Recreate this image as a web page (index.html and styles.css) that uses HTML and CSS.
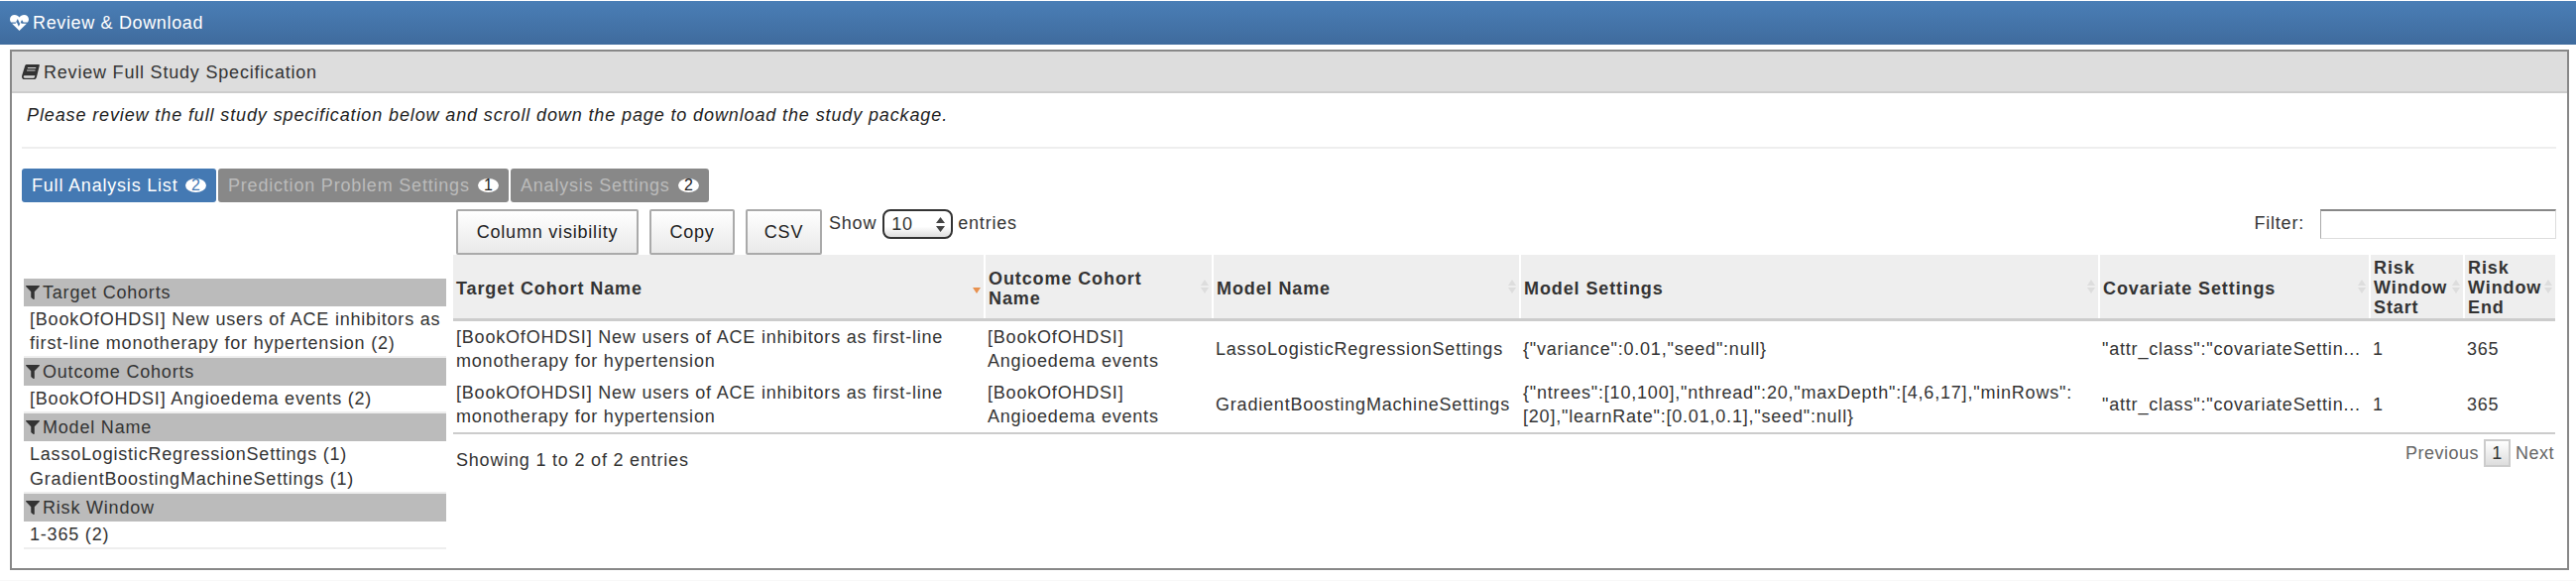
FILE: index.html
```html
<!DOCTYPE html>
<html>
<head>
  <meta charset="UTF-8">
  <title>Review &amp; Download</title>
  <link rel="stylesheet" href="styles.css">
</head>
<body>
  <div class="topbar">
    <svg class="top-icon" viewBox="0 0 24 20"><path d="M12 20 2.6 11h4.600l1.300-2.400 2.700 6 2.600-5.200 1 1.600h6.600zM1.300 9.400C.5 8.300 0 7 0 5.600 0 2.400 2.500 0 6 0c2.500 0 4.700 1.300 6 3.200C13.300 1.300 15.500 0 18 0c3.500 0 6 2.400 6 5.600 0 1.400-.5 2.700-1.300 3.800h-5.500l-2-3.100-2.500 5-2.800-6.200-2.400 4.300z"/></svg>
    Review &amp; Download
  </div>
  <div class="panel">
    <div class="panel-title">
      <svg class="book-icon" viewBox="0 0 24 20"><path fill-rule="evenodd" d="M7 0h15.500c1 0 1.500.7 1.200 1.700L20 16.500c-.5 2-1.700 3.500-4 3.500H4c-2.500 0-4-1.500-4-3.500 0-.6.100-1.200.3-1.800L4.200 2C4.600.7 5.500 0 7 0zm1 4-.4 1.400h11.200l.4-1.400zM7 7.300l-.4 1.400h11.200l.4-1.400zM4.500 15c-1.400 0-2.200.7-2.200 1.700 0 1 .8 1.600 2.200 1.600h11c.9 0 1.400-.4 1.700-1.200l.6-2.100z"/></svg>
      Review Full Study Specification
    </div>
    <div class="panel-body">
      <p class="intro">Please review the full study specification below and scroll down the page to download the study package.</p>
      <hr class="rule">
      <div class="tabs">
        <span class="tab tab-full active">Full Analysis List <b class="badge">2</b></span>
        <span class="tab tab-problem">Prediction Problem Settings <b class="badge">1</b></span>
        <span class="tab tab-analysis">Analysis Settings <b class="badge">2</b></span>
      </div>
      <div class="content">
        <div class="filters">
          <div class="filter-head"><svg class="funnel" viewBox="0 0 512 512"><path d="M488 0H24C3 0-8 26 7 41l185 185v206c0 8 4 15 10 20l80 56c16 11 38 0 38-20V226L505 41c15-15 4-41-17-41z"/></svg>Target Cohorts</div>
          <div class="filter-items">
            <div>[BookOfOHDSI] New users of ACE inhibitors as<br>first-line monotherapy for hypertension (2)</div>
          </div>
          <div class="filter-head"><svg class="funnel" viewBox="0 0 512 512"><path d="M488 0H24C3 0-8 26 7 41l185 185v206c0 8 4 15 10 20l80 56c16 11 38 0 38-20V226L505 41c15-15 4-41-17-41z"/></svg>Outcome Cohorts</div>
          <div class="filter-items">
            <div>[BookOfOHDSI] Angioedema events (2)</div>
          </div>
          <div class="filter-head"><svg class="funnel" viewBox="0 0 512 512"><path d="M488 0H24C3 0-8 26 7 41l185 185v206c0 8 4 15 10 20l80 56c16 11 38 0 38-20V226L505 41c15-15 4-41-17-41z"/></svg>Model Name</div>
          <div class="filter-items">
            <div>LassoLogisticRegressionSettings (1)</div>
            <div>GradientBoostingMachineSettings (1)</div>
          </div>
          <div class="filter-head"><svg class="funnel" viewBox="0 0 512 512"><path d="M488 0H24C3 0-8 26 7 41l185 185v206c0 8 4 15 10 20l80 56c16 11 38 0 38-20V226L505 41c15-15 4-41-17-41z"/></svg>Risk Window</div>
          <div class="filter-items">
            <div>1-365 (2)</div>
          </div>
        </div>
        <div class="results">
          <div class="toolbar">
            <span class="dt-btn btn-col">Column visibility</span>
            <span class="dt-btn btn-copy">Copy</span>
            <span class="dt-btn btn-csv">CSV</span>
            <span class="show-label">Show</span>
            <span class="select">10<svg class="select-arrows" viewBox="0 0 9 15"><path d="M4.500 0 9 6H0zM4.500 15 0 9h9z"/></svg></span>
            <span class="show-label">entries</span>
            <span class="filter-label">Filter:</span>
            <span class="filter-input"></span>
          </div>
          <table class="grid">
            <colgroup>
              <col class="c1"><col class="c2"><col class="c3"><col class="c4"><col class="c5"><col class="c6"><col class="c7">
            </colgroup>
            <thead>
              <tr>
                <th class="sorted">Target Cohort Name</th>
                <th>Outcome Cohort Name</th>
                <th>Model Name</th>
                <th>Model Settings</th>
                <th>Covariate Settings</th>
                <th class="risk">Risk Window Start</th>
                <th class="risk">Risk Window End</th>
              </tr>
            </thead>
            <tbody>
              <tr>
                <td>[BookOfOHDSI] New users of ACE inhibitors as first-line monotherapy for hypertension</td>
                <td>[BookOfOHDSI] Angioedema events</td>
                <td>LassoLogisticRegressionSettings</td>
                <td>{"variance":0.01,"seed":null}</td>
                <td>"attr_class":"covariateSettin...</td>
                <td>1</td>
                <td>365</td>
              </tr>
              <tr>
                <td>[BookOfOHDSI] New users of ACE inhibitors as first-line monotherapy for hypertension</td>
                <td>[BookOfOHDSI] Angioedema events</td>
                <td>GradientBoostingMachineSettings</td>
                <td>{"ntrees":[10,100],"nthread":20,"maxDepth":[4,6,17],"minRows":<br>[20],"learnRate":[0.01,0.1],"seed":null}</td>
                <td>"attr_class":"covariateSettin...</td>
                <td>1</td>
                <td>365</td>
              </tr>
            </tbody>
          </table>
          <div class="grid-foot">
            <span class="info">Showing 1 to 2 of 2 entries</span>
            <div class="pager">
              <span>Previous</span>
              <span class="page-on">1</span>
              <span>Next</span>
            </div>
          </div>
        </div>
      </div>
    </div>
  </div>
  <div class="page-end"></div>
</body>
</html>
```
FILE: styles.css
```css
html, body { margin: 0; padding: 0; }
body {
  background: #fff;
  color: #333;
  font-family: "Liberation Sans", Arial, sans-serif;
  font-size: 18px;
  letter-spacing: 0.8px;
  line-height: 24px;
  height: 586px;
  overflow: hidden;
}

.topbar {
  display: flex;
  align-items: center;
  gap: 4px;
  height: 44px;
  margin-top: 1px;
  padding-left: 10px;
  background: linear-gradient(#4a7eb6, #3f6b9d);
  color: #fff;
  letter-spacing: 0.65px;
}
.top-icon { width: 19px; height: 16px; fill: #fff; }

.panel {
  margin: 5px 7px 0 10px;
  height: 525px;
  box-sizing: border-box;
  border: 2px solid #888;
}
.panel-title {
  display: flex;
  align-items: center;
  gap: 4px;
  height: 39px;
  padding: 1px 0 0 10px;
  background: #ddd;
  border-bottom: 2px solid #ccc;
}
.book-icon { width: 18px; height: 15px; fill: #333; }

.panel-body { padding: 0 11px 0 10px; }
.intro {
  margin: 0;
  padding: 10px 0 0 5px;
  height: 44px;
  font-style: italic;
  letter-spacing: 0.88px;
  color: #222;
}
.rule { margin: 0 0 20px; border: 0; border-top: 2px solid #eee; }

.tabs { display: flex; gap: 2px; height: 34px; }
.tab {
  box-sizing: border-box;
  display: flex;
  align-items: center;
  justify-content: space-between;
  padding: 0 10px;
  background: #888;
  color: #bbb;
  border-radius: 3px;
}
.tab-full { width: 196px; }
.tab-problem { width: 293px; }
.tab-analysis { width: 200px; }
.tab.active { background: #4479b3; color: #fff; }
.badge {
  width: 21px;
  height: 14px;
  border-radius: 50%;
  background: #fff;
  color: #222;
  font-size: 16px;
  font-weight: normal;
  letter-spacing: 0;
  text-align: center;
  line-height: 14px;
}
.tab.active .badge { color: #4479b3; }

.content { display: flex; margin-top: 7px; }
.filters { width: 426px; margin: 70px 7px 0 2px; flex: none; }
.filter-head {
  display: flex;
  align-items: center;
  height: 28px;
  padding-left: 2px;
  background: #bbb;
}
.funnel { width: 14px; height: 14px; margin-right: 3px; fill: #333; }
.filter-items {
  padding: 1px 0 1px 6px;
  border-bottom: 2px solid #eee;
  white-space: nowrap;
}
.filter-items div + div { margin-top: 1px; }

.results { flex: 1; min-width: 0; }
.toolbar { display: flex; align-items: flex-start; height: 46px; }
.dt-btn {
  box-sizing: border-box;
  display: flex;
  align-items: center;
  justify-content: center;
  height: 46px;
  border: 2px solid #aaa;
  border-radius: 2px;
  background: linear-gradient(#fff, #e9e9e9);
  color: #222;
}
.btn-col { width: 184px; margin-left: 3px; }
.btn-copy { width: 86px; margin-left: 11px; }
.btn-csv { width: 77px; margin-left: 11px; }
.show-label { margin-left: 7px; line-height: 28px; }
.select {
  box-sizing: border-box;
  display: flex;
  align-items: center;
  justify-content: space-between;
  width: 71px;
  height: 30px;
  margin-left: 6px;
  padding: 0 6px 0 7px;
  border: 2px solid #333;
  border-radius: 8px;
  background: linear-gradient(#fff 60%, #ddd);
}
.select + .show-label { margin-left: 5px; }
.select-arrows { width: 9px; height: 15px; fill: #444; }
.filter-label { margin-left: auto; line-height: 28px; }
.filter-input {
  box-sizing: border-box;
  width: 238px;
  height: 30px;
  margin-left: 16px;
  border: 1px solid #ddd;
  border-top: 2px solid #888;
  border-left: 1px solid #aaa;
}

.grid {
  width: 2120px;
  border-collapse: collapse;
  table-layout: fixed;
}
.c1 { width: 536px; }
.c2 { width: 230px; }
.c3 { width: 310px; }
.c4 { width: 584px; }
.c5 { width: 273px; }
.c6 { width: 95px; }
.c7 { width: 92px; }
.grid th {
  position: relative;
  height: 65px;
  padding: 4px 22px 0 3px;
  background: #eee;
  border-left: 2px solid #fff;
  border-bottom: 3px solid #ccc;
  box-sizing: border-box;
  text-align: left;
  line-height: 20px;
  letter-spacing: 0.9px;
  font-weight: bold;
}
.grid th:first-child { border-left: 0; }
.grid th.risk { padding: 2px 10px 0 3px; }
.grid th::before,
.grid th::after {
  content: "";
  position: absolute;
  right: 3px;
  width: 0;
  height: 0;
  border-left: 4px solid transparent;
  border-right: 4px solid transparent;
}
.grid th::before { top: 25px; border-bottom: 6px solid #ddd; }
.grid th::after { top: 33px; border-top: 6px solid #ddd; }
.grid th.sorted::before { display: none; }
.grid th.sorted::after { border-top-color: #e8914e; }
.grid td {
  height: 56px;
  box-sizing: border-box;
  padding: 4px 3px;
  color: #333;
  vertical-align: middle;
  overflow: hidden;
}
.grid tbody tr:last-child td { border-bottom: 2px solid #ccc; }

.grid-foot { display: flex; justify-content: space-between; margin-top: 5px; }
.info { padding: 9px 0 0 3px; }
.pager { display: flex; align-items: center; gap: 5px; height: 28px; padding-right: 2px; color: #666; letter-spacing: 0.5px; }
.page-on {
  box-sizing: border-box;
  width: 27px;
  height: 28px;
  border: 2px solid #ccc;
  background: linear-gradient(#fff, #ddd);
  color: #333;
  text-align: center;
  line-height: 24px;
}

.page-end { margin-top: 10px; border-top: 1px solid #f8f8f8; }
```
